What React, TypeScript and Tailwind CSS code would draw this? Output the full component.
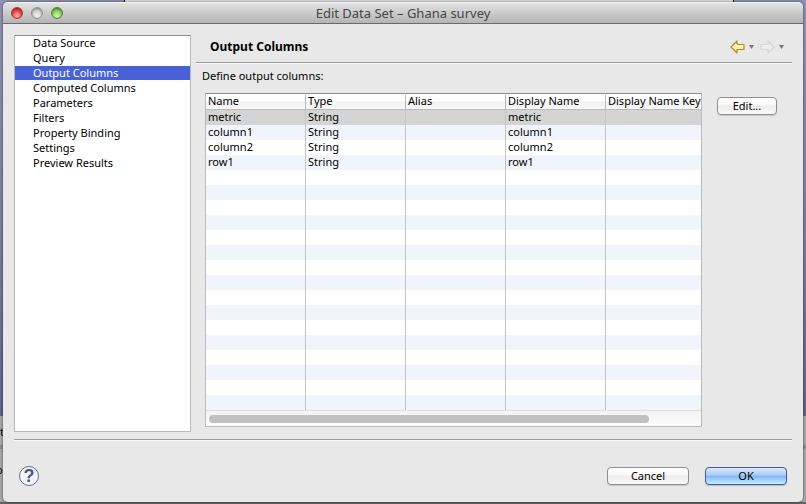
import { useState } from "react";

const pages = [
  "Data Source",
  "Query",
  "Output Columns",
  "Computed Columns",
  "Parameters",
  "Filters",
  "Property Binding",
  "Settings",
  "Preview Results",
];

const headers = ["Name", "Type", "Alias", "Display Name", "Display Name Key"];

const records = [
  ["metric", "String", "", "metric", ""],
  ["column1", "String", "", "column1", ""],
  ["column2", "String", "", "column2", ""],
  ["row1", "String", "", "row1", ""],
];

const blank = ["", "", "", "", ""];
const rows = [...records, ...Array.from({ length: 16 }, () => blank)];

function Light({ name, tone }: { name: string; tone: string }) {
  return (
    <button
      type="button"
      aria-label={name}
      className={`size-3 rounded-full border shadow-[inset_0_1px_2px_rgba(0,0,0,0.35)] ${tone}`}
    />
  );
}

function Desktop() {
  return (
    <div aria-hidden="true" className="absolute inset-0 overflow-hidden bg-[#a9a9ab]">
      <div className="h-[416px] bg-gradient-to-b from-[#9092b4] via-[#7f82a3] to-[#62658a]" />
      <div className="absolute top-0 right-[72px] left-[124px] h-3 border-x border-black bg-[#e4e4e4]" />
      <div className="absolute top-[445px] right-0 left-0 h-1 bg-[#8e8e90]" />
      <span className="absolute top-[424px] left-0 text-[11px] leading-4">t</span>
      <span className="absolute top-[462px] -left-1 text-[11px] leading-4">o</span>
      <div className="absolute right-0 bottom-0 left-0 h-[2px] bg-[#666]" />
    </div>
  );
}

function Arrow({ enabled }: { enabled: boolean }) {
  return (
    <svg width="15" height="14" viewBox="0 0 15 14" className={enabled ? "" : "-scale-x-100"}>
      <path
        d="M1 7 7 1v3.5h7v5H7V13z"
        fill={enabled ? "#fdf0a0" : "#ededed"}
        stroke={enabled ? "#b58a24" : "#d4d4d4"}
        strokeWidth="1.2"
        strokeLinejoin="round"
      />
      {enabled && <path d="M3 7 6 4v1.8h7" fill="none" stroke="#fffce5" />}
    </svg>
  );
}

function Caret() {
  return (
    <svg width="5" height="4" viewBox="0 0 5 4">
      <path d="M0 0h5L2.5 4z" fill="#777" />
    </svg>
  );
}

const pushButton =
  "h-[18px] rounded border border-[#8f8f8f] bg-[linear-gradient(#fff,#f8f8f8_45%,#ececec_50%,#fafafa)] text-center leading-4 shadow-[0_1px_1px_rgba(0,0,0,0.15)]";

export default function App() {
  const [page, setPage] = useState(2);
  const [row, setRow] = useState(0);

  return (
    <div className="relative h-screen text-[11px] text-black [font-family:'Lucida_Grande','Noto_Sans',sans-serif]">
      <Desktop />
      <div className="relative flex h-full flex-col px-[3px] pt-[2px] pb-[2px]">
        <main className="flex min-h-0 flex-1 flex-col overflow-hidden rounded-[5px] bg-[#e8e8e8] shadow-[0_0_3px_rgba(0,0,0,0.6)]">
          <header className="grid h-[22px] shrink-0 grid-cols-[1fr_auto_1fr] items-center border-t border-b border-t-[#f4f4f4] border-b-[#6b6b6b] bg-gradient-to-b from-[#e2e2e2] to-[#b4b4b4] px-2">
            <div className="flex gap-2">
              <Light name="Close" tone="border-[#a5383b] bg-[radial-gradient(circle_at_50%_80%,#ffb0a8,#e8403f_60%,#c92c30)]" />
              <Light name="Minimize" tone="border-[#8f8f8f] bg-[radial-gradient(circle_at_50%_80%,#f2f2f2,#cfcfcf_60%,#bbb)]" />
              <Light name="Zoom" tone="border-[#4d8438] bg-[radial-gradient(circle_at_50%_80%,#d5f7b0,#82cc56_60%,#5fa53b)]" />
            </div>
            <h1 className="text-[13px] leading-4 text-[#454545]">Edit Data Set – Ghana survey</h1>
          </header>

          <div className="flex min-h-0 flex-1 flex-col px-[11px]">
            <div className="flex min-h-0 flex-1 gap-[5px] pt-[11px]">
              <nav
                aria-label="Data set pages"
                className="mb-[7px] w-[177px] shrink-0 border border-[#b9b9b9] border-t-[#8e8e8e] bg-white"
              >
                <ul>
                  {pages.map((name, i) => (
                    <li key={name} className="pb-px">
                      <button
                        type="button"
                        aria-current={i === page ? "page" : undefined}
                        onClick={() => setPage(i)}
                        className={`block h-[14px] w-full pl-[18px] text-left leading-[14px] ${
                          i === page ? "bg-[#4961d6] text-white" : ""
                        }`}
                      >
                        {name}
                      </button>
                    </li>
                  ))}
                </ul>
              </nav>

              <section className="flex min-w-0 flex-1 flex-col">
                <div className="flex h-7 shrink-0 items-center justify-between border-b border-[#999] pr-2 pb-1 pl-[14px] shadow-[0_1px_0_#fafafa]">
                  <h2 className="text-[12px] leading-4 font-bold">{pages[page]}</h2>
                  <div className="flex items-center gap-[6px]">
                    <button type="button" aria-label="Back" className="flex items-center gap-1">
                      <Arrow enabled />
                      <Caret />
                    </button>
                    <button type="button" aria-label="Forward" className="flex items-center gap-1">
                      <Arrow enabled={false} />
                      <Caret />
                    </button>
                  </div>
                </div>
                <p className="shrink-0 pt-[5px] pl-[6px] leading-4">Define output columns:</p>

                <div className="flex min-h-0 flex-1 items-start gap-[15px] pt-[9px] pr-[15px] pb-3 pl-[9px]">
                  <div className="flex h-full min-w-0 flex-1 flex-col border border-[#b9b9b9] border-t-[#8e8e8e] bg-white">
                    <div className="min-h-0 flex-1 overflow-hidden">
                      <table className="w-[560px] min-w-full table-fixed border-collapse text-left">
                        <colgroup>
                          <col className="w-[100px]" />
                          <col className="w-[100px]" />
                          <col className="w-[100px]" />
                          <col className="w-[100px]" />
                          <col />
                        </colgroup>
                        <thead>
                          <tr className="h-4 bg-[linear-gradient(#fff,#fff_45%,#f1f1f1_50%,#fafafa)] shadow-[inset_0_-1px_0_#b9b9b9]">
                            {headers.map((h) => (
                              <th
                                key={h}
                                scope="col"
                                className="p-0 align-top font-normal whitespace-nowrap"
                              >
                                <div className="mt-px h-[14px] border-r border-[#b9b9b9] pl-[2px] leading-3">
                                  {h}
                                </div>
                              </th>
                            ))}
                          </tr>
                        </thead>
                        <tbody>
                          {rows.map((cells, r) => (
                            <tr
                              key={r}
                              onClick={() => r < records.length && setRow(r)}
                              className={
                                r === row ? "bg-[#d4d4d4]" : r % 2 ? "bg-[#f1f5fb]" : "bg-white"
                              }
                            >
                              {cells.map((cell, c) => (
                                <td key={c} className="p-0">
                                  <div
                                    className={`h-[15px] border-r pl-[2px] leading-[14px] ${
                                      r === row ? "border-[#c6c6c6]" : "border-[#c2c4c8]"
                                    }`}
                                  >
                                    {cell}
                                  </div>
                                </td>
                              ))}
                            </tr>
                          ))}
                        </tbody>
                      </table>
                    </div>
                    <div className="h-4 shrink-0 border-t border-[#dedede] bg-gradient-to-b from-[#f3f3f3] to-[#fcfcfc] px-[3px] pt-1">
                      <div className="h-2 w-[90%] rounded-full bg-[#c1c1c1]" />
                    </div>
                  </div>
                  <button type="button" className={`mt-1 w-[60px] shrink-0 ${pushButton}`}>
                    Edit...
                  </button>
                </div>
              </section>
            </div>

            <footer className="flex h-[63px] shrink-0 items-center justify-between border-t border-[#999] pt-[10px] pr-[5px] pl-[5px] shadow-[inset_0_1px_0_#fafafa]">
              <button
                type="button"
                aria-label="Help"
                className="flex size-5 items-center justify-center rounded-full border border-[#686e85] bg-[#f3f4f9] text-[18px] leading-none font-bold text-[#4c5680] [font-family:'Liberation_Sans',sans-serif]"
              >
                ?
              </button>
              <div className="flex gap-4">
                <button type="button" className={`w-[82px] ${pushButton}`}>
                  Cancel
                </button>
                <button
                  type="button"
                  className="h-[18px] w-[82px] rounded border border-[#50559a] bg-[linear-gradient(#dbe7fa,#a9cbf6_45%,#82b5f2_50%,#c3f0ff)] text-center leading-4 shadow-[0_1px_1px_rgba(0,0,0,0.2)]"
                >
                  OK
                </button>
              </div>
            </footer>
          </div>
        </main>
      </div>
    </div>
  );
}
